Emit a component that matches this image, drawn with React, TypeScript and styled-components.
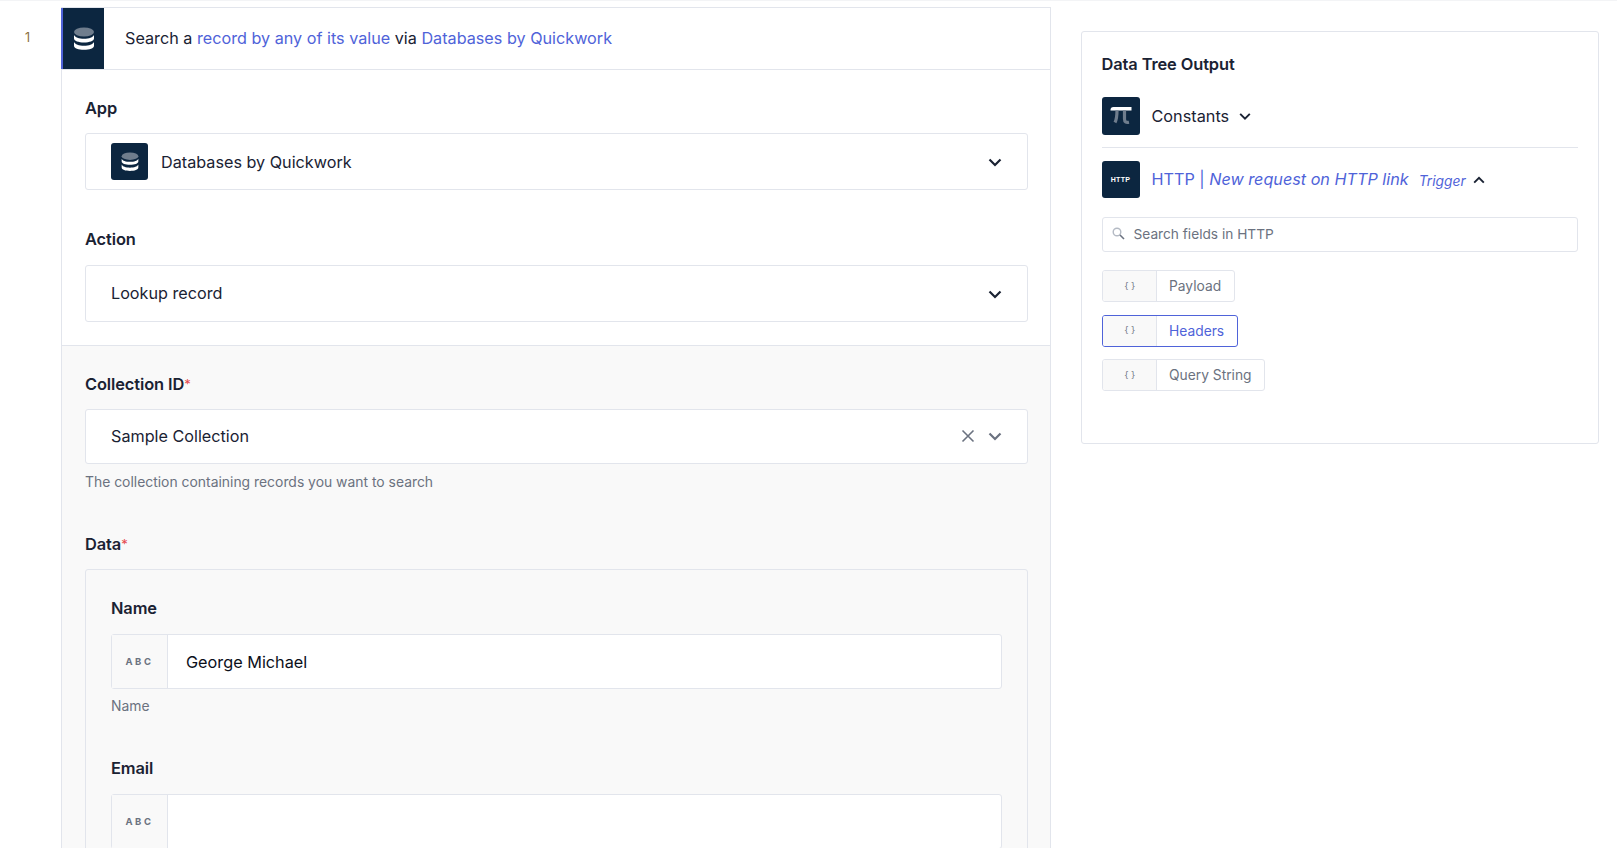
import React from 'react';
import styled, { createGlobalStyle } from "styled-components";

const GlobalStyle = createGlobalStyle`
  html, body {
    margin: 0;
    padding: 0;
    background: #fff;
    font-family: "Inter", "Liberation Sans", sans-serif;
    color: #1a2233;
  }
`

const DatabaseIcon = ({ size }: { size: number }) => (
    <svg width={size} height={size} viewBox="0 0 24 24">
        <ellipse cx="12" cy="5" rx="10" ry="4.500" fill="#6f7d8d"/>
        <path d="M2 8c1 2.400 5 3.800 10 3.800S21 10.400 22 8v3.400c0 2.400-4.500 4-10 4s-10-1.600-10-4z" fill="#fff"/>
        <path d="M2 15c1 2.400 5 3.800 10 3.800s9-1.400 10-3.800v3.700c0 2.500-4.500 4.100-10 4.100S2 21.200 2 18.700z" fill="#fff"/>
    </svg>
)

const Chevron = ({ up, color = "#1a2233", size = 16 }: { up?: boolean, color?: string, size?: number }) => (
    <svg width={size} height={size} viewBox="0 0 16 16" fill="none">
        <path d={up ? "M2.500 11 8 5.500 13.500 11" : "M2.500 5.500 8 11l5.500-5.500"} stroke={color} strokeWidth="2.200"/>
    </svg>
)

const Field = ({ name, value, hint }: { name: string, value?: string, hint?: string }) => (
    <InnerField>
        <Label>{name}</Label>
        <TextInput>
            <Prefix>ABC</Prefix>
            <InputValue>{value}</InputValue>
        </TextInput>
        {hint && <FieldHint>{hint}</FieldHint>}
    </InnerField>
)

const Pill = ({ text, active }: { text: string, active?: boolean }) => (
    <StyledPill $active={active}>
        <PillPrefix>{"{ }"}</PillPrefix>
        <PillText $active={active}>{text}</PillText>
    </StyledPill>
)

export default function App() {
    return (
        <Page>
            <GlobalStyle/>
            <StepNumber>1</StepNumber>
            <Card>
                <CardHeader>
                    <HeaderIcon><DatabaseIcon size={24}/></HeaderIcon>
                    <HeaderText>
                        Search a <Accent>record by any of its value</Accent> via <Accent>Databases by Quickwork</Accent>
                    </HeaderText>
                </CardHeader>
                <WhiteSection>
                    <Label>App</Label>
                    <Select>
                        <AppBadge><DatabaseIcon size={20}/></AppBadge>
                        <SelectText>Databases by Quickwork</SelectText>
                        <Chevron/>
                    </Select>
                    <ActionLabel>Action</ActionLabel>
                    <ActionSelect>
                        <ActionText>Lookup record</ActionText>
                        <Chevron/>
                    </ActionSelect>
                </WhiteSection>
                <GraySection>
                    <Label>Collection ID<Required>*</Required></Label>
                    <CollectionSelect>
                        <SelectText>Sample Collection</SelectText>
                        <svg width="14" height="14" viewBox="0 0 14 14" fill="none">
                            <path d="M1.500 1.500l11 11M12.500 1.500l-11 11" stroke="#6b7280" strokeWidth="1.600"/>
                        </svg>
                        <Chevron color="#6b7280"/>
                    </CollectionSelect>
                    <Hint>The collection containing records you want to search</Hint>
                    <DataLabel>Data<Required>*</Required></DataLabel>
                    <DataBox>
                        <Field name="Name" value="George Michael" hint="Name"/>
                        <Field name="Email"/>
                    </DataBox>
                </GraySection>
            </Card>
            <Panel>
                <PanelTitle>Data Tree Output</PanelTitle>
                <ConstantsRow>
                    <TreeIcon>
                        <svg width="24" height="24" viewBox="0 0 24 24" fill="none">
                            <path d="M1.500 6Q1.500 3 4.500 3H22.500v3.500H1.500z" fill="#fff"/>
                            <path d="M8 6.500c0 5-.5 9-2 12" stroke="#6f7d8d" strokeWidth="3.200"/>
                            <path d="M15.500 6.500v8.500c0 2.800 1.500 3.800 4.500 3.200" stroke="#6f7d8d" strokeWidth="3.200"/>
                        </svg>
                    </TreeIcon>
                    <ConstantsText>Constants</ConstantsText>
                    <Chevron size={14}/>
                </ConstantsRow>
                <PanelDivider/>
                <HttpRow>
                    <HttpIcon><HttpMark>HTTP</HttpMark></HttpIcon>
                    <HttpTitle>HTTP | <em>New request on HTTP link</em></HttpTitle>
                    <TriggerText>Trigger</TriggerText>
                    <Chevron up size={14}/>
                </HttpRow>
                <SearchBox>
                    <svg width="13" height="13" viewBox="0 0 13 13" fill="none">
                        <circle cx="5" cy="5" r="3.800" stroke="#b4bac4" strokeWidth="1.400"/>
                        <path d="M8 8l4 4" stroke="#6b7280" strokeWidth="1.600"/>
                    </svg>
                    <SearchText>Search fields in HTTP</SearchText>
                </SearchBox>
                <PillList>
                    <Pill text="Payload"/>
                    <Pill text="Headers" active/>
                    <Pill text="Query String"/>
                </PillList>
            </Panel>
        </Page>
    );
}

const Page = styled.div`
  height: 848px;
  overflow: hidden;
  display: flex;
  align-items: flex-start;
  box-sizing: border-box;
  padding-top: 6px;
  border-top: 1px solid #f3f4f6;
`
const StepNumber = styled.div`
  width: 61px;
  flex-shrink: 0;
  box-sizing: border-box;
  padding: 22px 0 0 25px;
  font-size: 12.500px;
  line-height: 18px;
  color: #8a6d3b;
`
const Card = styled.div`
  width: 990px;
  flex-shrink: 0;
  box-sizing: border-box;
  border: 1px solid #e2e5ec;
`
const CardHeader = styled.div`
  display: flex;
  align-items: center;
  height: 61px;
  margin-left: -1px;
  border-bottom: 1px solid #e2e5ec;
`
const HeaderIcon = styled.div`
  width: 43px;
  height: 61px;
  flex-shrink: 0;
  display: flex;
  align-items: center;
  justify-content: center;
  background: #0c2640;
  border-left: 2px solid #4f63d9;
  box-sizing: border-box;
`
const HeaderText = styled.div`
  margin: -1px 0 0 21px;
  font-size: 16.200px;
  color: #1a2233;
`
const Accent = styled.span`
  color: #4f63d9;
`
const WhiteSection = styled.div`
  padding: 27px 22px 23px 23px;
  border-bottom: 1px solid #e2e5ec;
`
const GraySection = styled.div`
  background: #f9f9f9;
  padding: 27px 22px 0 23px;
  height: 600px;
`
const Label = styled.div`
  font-size: 16.400px;
  font-weight: 600;
  line-height: 22px;
  padding-bottom: 2px;
  letter-spacing: -0.100px;
  color: #1a2233;
`
const ActionLabel = styled(Label)`
  margin-top: 38px;
`
const DataLabel = styled(Label)`
  margin-top: 42px;
`
const Required = styled.span`
  color: #e5484d;
  font-size: 13px;
  font-weight: 400;
  vertical-align: top;
`
const Select = styled.div`
  display: flex;
  align-items: center;
  height: 57px;
  margin-top: 12px;
  padding: 0 24px 0 25px;
  box-sizing: border-box;
  background: #fff;
  border: 1px solid #e2e5ec;
  border-radius: 3px;
`
const ActionSelect = styled(Select)`
  margin-top: 13px;
`
const CollectionSelect = styled(Select)`
  height: 55px;
  gap: 12px;
  padding-bottom: 2px;
`
const AppBadge = styled.div`
  width: 37px;
  height: 37px;
  margin-right: 13px;
  display: flex;
  align-items: center;
  justify-content: center;
  background: #0c2640;
  border-radius: 3px;
`
const SelectText = styled.div`
  flex: 1;
  font-size: 16.200px;
  color: #1a2233;
`
const ActionText = styled(SelectText)`
  margin-top: -2px;
`
const Hint = styled.div`
  margin-top: 9px;
  font-size: 13.900px;
  line-height: 18px;
  color: #6b7280;
`
const FieldHint = styled(Hint)`
  margin-top: 8px;
`
const DataBox = styled.div`
  margin-top: 12px;
  padding: 27px 25px 0;
  border: 1px solid #e2e5ec;
  border-radius: 3px;
  height: 400px;
`
const InnerField = styled.div`
  margin-bottom: 42px;
`
const TextInput = styled.div`
  display: flex;
  height: 53px;
  margin-top: 13px;
  background: #fff;
  border: 1px solid #e2e5ec;
  border-radius: 3px;
`
const Prefix = styled.div`
  width: 55px;
  display: flex;
  align-items: center;
  justify-content: center;
  flex-shrink: 0;
  background: #f9f9f9;
  border-right: 1px solid #e2e5ec;
  font-size: 9.500px;
  font-weight: 700;
  letter-spacing: 2.600px;
  color: #6b7280;
`
const InputValue = styled.div`
  display: flex;
  align-items: center;
  padding-left: 18px;
  font-size: 16.250px;
  color: #0b0f1a;
`
const Panel = styled.div`
  width: 518px;
  height: 413px;
  flex-shrink: 0;
  margin: 24px 0 0 30px;
  box-sizing: border-box;
  padding: 21px 20px 0 19.500px;
  border: 1px solid #e2e5ec;
  border-radius: 3px;
`
const PanelTitle = styled.div`
  font-size: 16.400px;
  font-weight: 600;
  line-height: 22px;
  padding-bottom: 2px;
  letter-spacing: -0.100px;
  color: #1a2233;
`
const TreeRow = styled.div`
  display: flex;
  align-items: center;
`
const ConstantsRow = styled(TreeRow)`
  margin-top: 20px;
`
const HttpRow = styled(TreeRow)`
  margin-top: 13px;
`
const TreeIcon = styled.div`
  width: 38px;
  height: 38px;
  flex-shrink: 0;
  display: flex;
  align-items: center;
  justify-content: center;
  background: #0c2640;
  border-radius: 3px;
`
const HttpIcon = styled(TreeIcon)`
  height: 37px;
`
const HttpMark = styled.span`
  font-family: "Liberation Sans", sans-serif;
  font-size: 7px;
  font-weight: 700;
  letter-spacing: 0.300px;
  color: #fff;
`
const ConstantsText = styled.div`
  margin: 0 9px 0 12px;
  font-size: 16.250px;
  color: #1a2233;
`
const PanelDivider = styled.div`
  height: 1px;
  margin-top: 12px;
  background: #e2e5ec;
`
const HttpTitle = styled.div`
  margin: -2px 0 0 12px;
  font-size: 16.200px;
  color: #4f63d9;
`
const TriggerText = styled.em`
  margin: 2px 6px 0 10px;
  font-size: 13.800px;
  color: #4f63d9;
`
const SearchBox = styled.div`
  display: flex;
  align-items: center;
  height: 35px;
  margin-top: 19px;
  padding: 0 0 2px 9px;
  box-sizing: border-box;
  border: 1px solid #e2e5ec;
  border-radius: 3px;
`
const SearchText = styled.span`
  margin-left: 9px;
  font-size: 13.700px;
  color: #6b7280;
`
const PillList = styled.div`
  display: flex;
  flex-direction: column;
  align-items: flex-start;
  gap: 12.500px;
  margin-top: 18px;
`
const StyledPill = styled.div<{ $active?: boolean }>`
  display: flex;
  height: 32px;
  box-sizing: border-box;
  border: 1px solid ${props => props.$active ? "#4f63d9" : "#e2e5ec"};
  border-radius: 3px;
  overflow: hidden;
`
const PillPrefix = styled.div`
  width: 53px;
  display: flex;
  align-items: center;
  justify-content: center;
  background: #f9f9f9;
  border-right: 1px solid #e2e5ec;
  font-family: "DejaVu Sans Mono", monospace;
  font-size: 8px;
  letter-spacing: -1.500px;
  white-space: pre;
  color: #6b7280;
`
const PillText = styled.div<{ $active?: boolean }>`
  display: flex;
  align-items: center;
  padding: 0 12.500px;
  font-size: 13.800px;
  color: ${props => props.$active ? "#4f63d9" : "#6b7280"};
`
